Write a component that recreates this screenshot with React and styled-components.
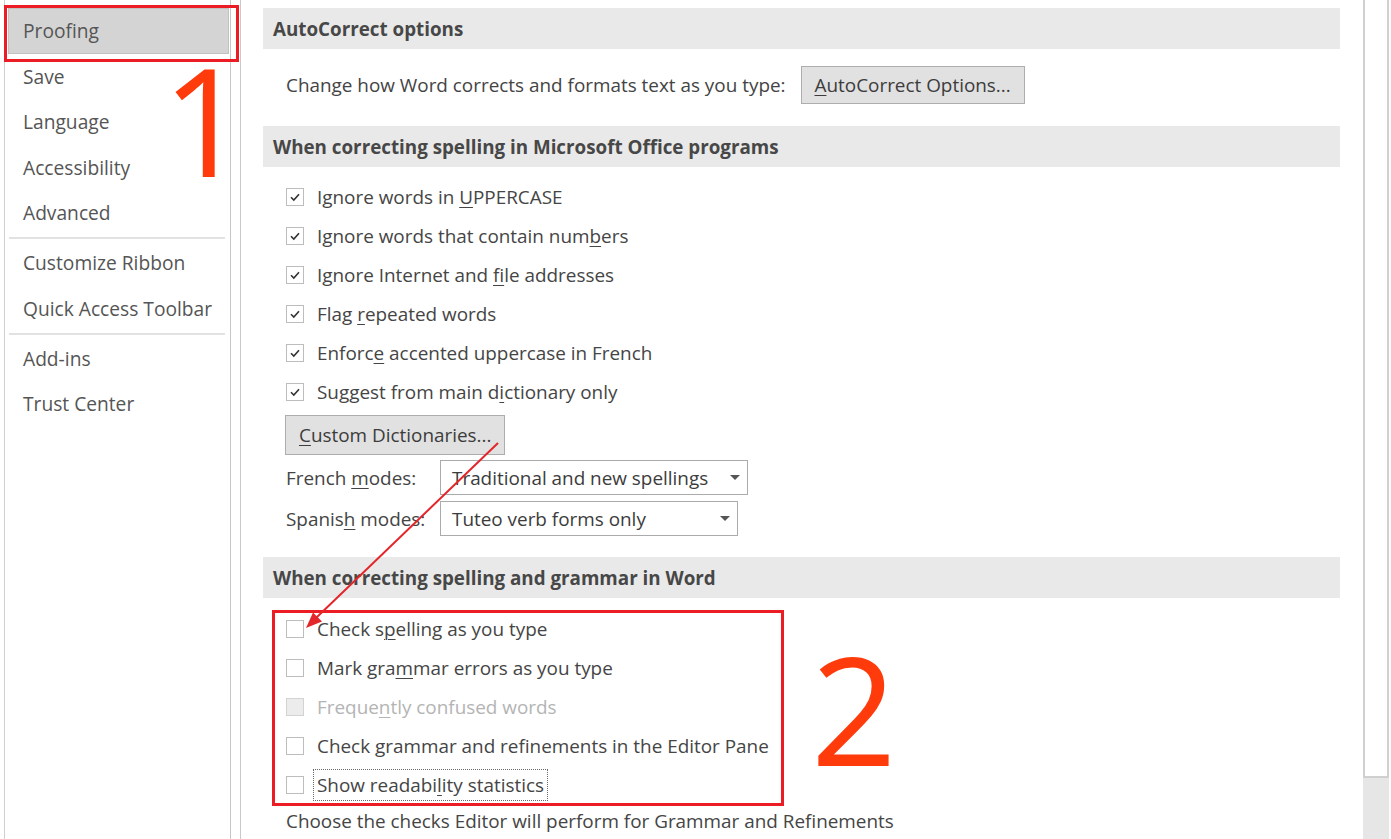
import React from "react";
import styled, { createGlobalStyle } from "styled-components";

const GlobalStyle = createGlobalStyle`
  html, body {
    margin: 0;
    padding: 0;
    background: #ffffff;
  }
  body {
    font-family: "Open Sans", "Noto Sans", sans-serif;
    color: #444444;
  }
`;

const TEXT = 18.9;

const Page = styled.div`
  position: relative;
  display: flex;
  width: 1391px;
  height: 839px;
  overflow: hidden;
  background: #ffffff;
`;

const Sidebar = styled.nav`
  margin-left: 4px;
  padding: 8px 1px 0 3px;
  box-sizing: border-box;
  width: 227px;
  border-left: 1px solid #cfcfcf;
  border-right: 1px solid #c6c6c6;
  display: flex;
  flex-direction: column;
`;

const NavItem = styled.div`
  height: 45.5px;
  display: flex;
  align-items: center;
  padding-left: 14px;
  box-sizing: border-box;
  font-size: 19.2px;
  color: #555555;
  white-space: nowrap;
  background: ${(p) => (p.$active ? "#d4d4d4" : "transparent")};
  border: 1px solid ${(p) => (p.$active ? "#c2c2c2" : "transparent")};
`;

const NavSep = styled.div`
  height: 2px;
  margin: 1.5px 4px 1px 1px;
  background: #e2e2e2;
`;

const Content = styled.main`
  width: 1100px;
  margin-left: 9px;
  box-sizing: border-box;
  border-left: 1px solid #c9c9c9;
  padding: 8px 0 0 22px;
  display: flex;
  flex-direction: column;
  white-space: nowrap;
`;

const SectionHead = styled.div`
  height: 41px;
  flex-shrink: 0;
  display: flex;
  align-items: center;
  padding-left: 10px;
  margin-top: ${(p) => p.$top || 0}px;
  background: #e9e9e9;
  font-size: 18.8px;
  font-weight: 700;
  color: #474747;
`;

const InlineRow = styled.div`
  display: flex;
  align-items: center;
  gap: 15px;
  padding-left: 23px;
  margin-top: 17px;
  font-size: ${TEXT}px;
`;

const Button = styled.div`
  height: ${(p) => p.$h || 38}px;
  display: inline-flex;
  align-items: center;
  padding: 0 13px;
  box-sizing: border-box;
  background: #e1e1e1;
  border: 1px solid #adadad;
  font-size: ${TEXT}px;
  color: #3c3c3c;
`;

const CheckList = styled.div`
  display: flex;
  flex-direction: column;
  padding-top: ${(p) => p.$top || 10}px;
`;

const CheckRow = styled.div`
  height: 39px;
  display: flex;
  align-items: center;
  padding-left: 23px;
  font-size: ${TEXT}px;
  color: ${(p) => (p.$disabled ? "#b4b4b4" : "#454545")};
`;

const Box = styled.span`
  width: 18px;
  height: 18px;
  box-sizing: border-box;
  margin-right: 13px;
  flex-shrink: 0;
  display: flex;
  align-items: center;
  justify-content: center;
  border: 1px solid ${(p) => (p.$disabled ? "#d3d3d3" : "#bdbdbd")};
  background: ${(p) => (p.$disabled ? "#ececec" : "#ffffff")};
`;

const Focus = styled.span`
  margin-left: -4px;
  padding: 2px 3px;
  border: 1px dotted #6a6a6a;
`;

const Key = styled.span`
  text-decoration: underline;
  text-underline-offset: 3px;
  text-decoration-thickness: 1px;
`;

const DictRow = styled.div`
  padding: 4px 0 0 22px;
  display: flex;
`;

const ModeRow = styled.div`
  display: flex;
  align-items: center;
  height: 35px;
  margin-top: ${(p) => p.$top}px;
  padding-left: 23px;
  font-size: ${TEXT}px;
`;

const ModeLabel = styled.span`
  width: 154px;
  flex-shrink: 0;
`;

const Select = styled.div`
  width: ${(p) => p.$w}px;
  height: 35px;
  box-sizing: border-box;
  border: 1px solid #ababab;
  display: flex;
  align-items: center;
  justify-content: space-between;
  padding: 0 7px 0 11px;
  color: #3c3c3c;
`;

const Caret = styled.span`
  width: 0;
  height: 0;
  border-left: 5px solid transparent;
  border-right: 5px solid transparent;
  border-top: 5px solid #555555;
`;

const Note = styled.div`
  padding: 3px 0 0 23px;
  font-size: ${TEXT}px;
  color: #454545;
`;

const Scrollbar = styled.div`
  width: 26px;
  margin-left: 23px;
  display: flex;
  flex-direction: column;
`;

const ScrollThumb = styled.div`
  height: 778px;
  box-sizing: border-box;
  border: 2px solid #d0d0d0;
  border-top: none;
  background: #ffffff;
`;

const ScrollTrack = styled.div`
  flex: 1;
  background: #e6e6e6;
`;

const Frame = styled.div`
  position: absolute;
  left: ${(p) => p.$x}px;
  top: ${(p) => p.$y}px;
  width: ${(p) => p.$w}px;
  height: ${(p) => p.$h}px;
  box-sizing: border-box;
  border: 3px solid #ec1c24;
  pointer-events: none;
`;

const BigNum = styled.div`
  position: absolute;
  left: ${(p) => p.$x}px;
  top: ${(p) => p.$y}px;
  font-family: "Open Sans", sans-serif;
  font-size: 150px;
  line-height: 1;
  font-weight: 400;
  color: #ff3b0c;
`;

const ArrowLayer = styled.svg`
  position: absolute;
  left: 0;
  top: 0;
  pointer-events: none;
`;

const Check = () => (
  <svg width="12" height="10" viewBox="0 0 12 10">
    <path d="M2 5.2 L4.8 8 L10 2.2" fill="none" stroke="#333" strokeWidth="1.6" />
  </svg>
);

const CheckItem = ({ checked, disabled, children }) => (
  <CheckRow $disabled={disabled}>
    <Box $disabled={disabled}>{checked ? <Check /> : null}</Box>
    {children}
  </CheckRow>
);

const nav1 = ["Proofing", "Save", "Language", "Accessibility", "Advanced"];

const App = () => {
  return (
    <>
      <GlobalStyle />
      <Page>
        <Sidebar>
          {nav1.map((n, i) => (
            <NavItem key={n} $active={i === 0}>
              {n}
            </NavItem>
          ))}
          <NavSep />
          <NavItem>Customize Ribbon</NavItem>
          <NavItem>Quick Access Toolbar</NavItem>
          <NavSep />
          <NavItem>Add-ins</NavItem>
          <NavItem>Trust Center</NavItem>
        </Sidebar>

        <Content>
          <SectionHead>AutoCorrect options</SectionHead>
          <InlineRow>
            <span>Change how Word corrects and formats text as you type:</span>
            <Button>
              <Key>A</Key>utoCorrect Options...
            </Button>
          </InlineRow>

          <SectionHead $top={22}>When correcting spelling in Microsoft Office programs</SectionHead>
          <CheckList $top={10}>
            <CheckItem checked>
              <span>
                Ignore words in <Key>U</Key>PPERCASE
              </span>
            </CheckItem>
            <CheckItem checked>
              <span>
                Ignore words that contain num<Key>b</Key>ers
              </span>
            </CheckItem>
            <CheckItem checked>
              <span>
                Ignore Internet and <Key>f</Key>ile addresses
              </span>
            </CheckItem>
            <CheckItem checked>
              <span>
                Flag <Key>r</Key>epeated words
              </span>
            </CheckItem>
            <CheckItem checked>
              <span>
                Enforc<Key>e</Key> accented uppercase in French
              </span>
            </CheckItem>
            <CheckItem checked>
              <span>
                Suggest from main d<Key>i</Key>ctionary only
              </span>
            </CheckItem>
          </CheckList>
          <DictRow>
            <Button $h={40}>
              <Key>C</Key>ustom Dictionaries...
            </Button>
          </DictRow>
          <ModeRow $top={5}>
            <ModeLabel>
              French <Key>m</Key>odes:
            </ModeLabel>
            <Select $w={308}>
              <span>Traditional and new spellings</span>
              <Caret />
            </Select>
          </ModeRow>
          <ModeRow $top={6}>
            <ModeLabel>
              Spanis<Key>h</Key> modes:
            </ModeLabel>
            <Select $w={298}>
              <span>Tuteo verb forms only</span>
              <Caret />
            </Select>
          </ModeRow>

          <SectionHead $top={21}>When correcting spelling and grammar in Word</SectionHead>
          <CheckList $top={11.5}>
            <CheckItem>
              <span>
                Check s<Key>p</Key>elling as you type
              </span>
            </CheckItem>
            <CheckItem>
              <span>
                Mark gra<Key>m</Key>mar errors as you type
              </span>
            </CheckItem>
            <CheckItem disabled>
              <span>
                Freque<Key>n</Key>tly confused words
              </span>
            </CheckItem>
            <CheckItem>
              <span>Check grammar and refinements in the Editor Pane</span>
            </CheckItem>
            <CheckItem>
              <Focus>
                Show readabi<Key>l</Key>ity statistics
              </Focus>
            </CheckItem>
          </CheckList>
          <Note>Choose the checks Editor will perform for Grammar and Refinements</Note>
        </Content>

        <Scrollbar>
          <ScrollThumb />
          <ScrollTrack />
        </Scrollbar>

        <Frame $x={4} $y={5} $w={235} $h={57} />
        <Frame $x={272} $y={610} $w={512} $h={196} />
        <BigNum $x={162} $y={44}>1</BigNum>
        <BigNum $x={811} $y={633}>2</BigNum>
        <ArrowLayer width="1391" height="839">
          <line x1="498" y1="443" x2="316" y2="618" stroke="#e3262a" strokeWidth="2" />
          <polygon points="306,628 322,621.5 313,612.5" fill="#e3262a" />
        </ArrowLayer>
      </Page>
    </>
  );
};

export default App;
